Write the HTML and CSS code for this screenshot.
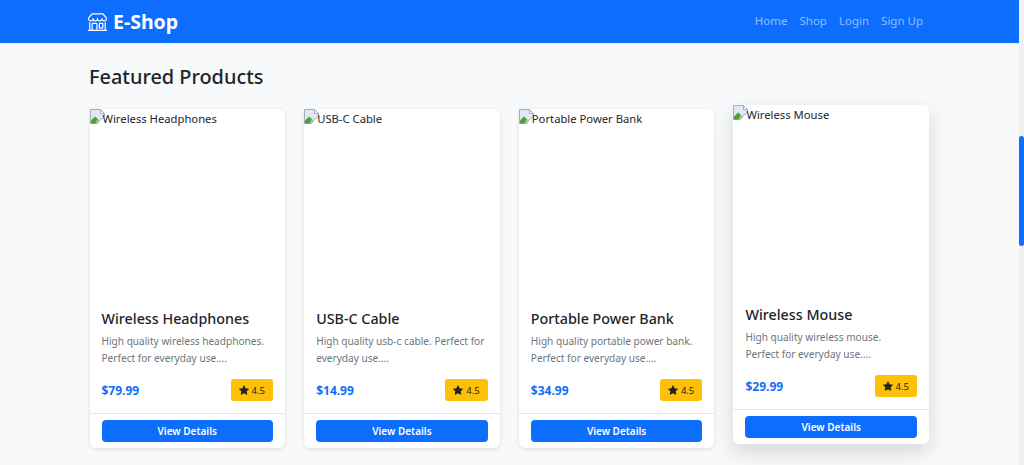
FILE: index.html
```html
<!DOCTYPE html>
<html lang="en">
<head>
    <meta charset="UTF-8">
    <meta name="viewport" content="width=device-width, initial-scale=1.0">
    <title>E-Shop</title>
    <link rel="stylesheet" href="styles.css">
</head>
<body>
    <nav class="navbar">
        <div class="nav-inner">
            <a class="brand" href="#">
                <svg class="brand-icon" viewBox="0 0 16 16" fill="currentColor"><path d="M2.97 1.35A1 1 0 0 1 3.73 1h8.54a1 1 0 0 1 .76.35l2.609 3.044A1.5 1.5 0 0 1 16 5.37v.255a2.375 2.375 0 0 1-4.25 1.458A2.37 2.37 0 0 1 9.875 8 2.37 2.37 0 0 1 8 7.083 2.37 2.37 0 0 1 6.125 8a2.37 2.37 0 0 1-1.875-.917A2.375 2.375 0 0 1 0 5.625V5.37a1.5 1.5 0 0 1 .361-.976zm1.78 4.275a1.375 1.375 0 0 0 2.75 0 .5.5 0 0 1 1 0 1.375 1.375 0 0 0 2.75 0 .5.5 0 0 1 1 0 1.375 1.375 0 1 0 2.75 0V5.37a.5.5 0 0 0-.12-.325L12.27 2H3.73L1.12 5.045A.5.5 0 0 0 1 5.37v.255a1.375 1.375 0 0 0 2.75 0 .5.5 0 0 1 1 0M1.5 8.5A.5.5 0 0 1 2 9v6h1v-5a1 1 0 0 1 1-1h3a1 1 0 0 1 1 1v5h6V9a.5.5 0 0 1 1 0v6h.5a.5.5 0 0 1 0 1H.5a.5.5 0 0 1 0-1H1V9a.5.5 0 0 1 .5-.5M4 15h3v-5H4zm5-5a1 1 0 0 1 1-1h2a1 1 0 0 1 1 1v3a1 1 0 0 1-1 1h-2a1 1 0 0 1-1-1zm3 0h-2v3h2z"/></svg>
                E-Shop
            </a>
            <div class="nav-links">
                <a class="nav-link" href="#">Home</a>
                <a class="nav-link" href="#">Shop</a>
                <a class="nav-link" href="#">Login</a>
                <a class="nav-link" href="#">Sign Up</a>
            </div>
        </div>
    </nav>

    <main class="container">
        <h2 class="section-title">Featured Products</h2>
        <div class="product-grid">
            <div class="card">
                <div class="card-image">
                    <svg class="broken-icon" viewBox="0 0 16 16"><path d="M.5.5h10l4 4v3l-4 3-3 4h-7z" fill="#dfe8f5" stroke="#a9adb3"/><path d="M10.5.5v4h4z" fill="#fff" stroke="#a9adb3"/><path d="M1 14.5v-3l4-4 3 2.5-2.5 4.500z" fill="#4f9f35"/><path d="M5.500 14.500l2.500-4 2 .500-2.500 3.500z" fill="#9fc98f"/></svg><span>Wireless Headphones</span>
                </div>
                <div class="card-body">
                    <h5 class="card-title">Wireless Headphones</h5>
                    <p class="card-text">High quality wireless headphones. Perfect for everyday use....</p>
                    <div class="price-row">
                        <span class="price">$79.99</span>
                        <span class="rating"><svg class="star" viewBox="0 0 16 16" fill="currentColor"><path d="M3.612 15.443c-.386.198-.824-.149-.746-.592l.83-4.73L.173 6.765c-.329-.314-.158-.888.283-.95l4.898-.696L7.538.792c.197-.39.73-.39.927 0l2.184 4.327 4.898.696c.441.062.612.636.282.95l-3.522 3.356.83 4.73c.078.443-.36.79-.746.592L8 13.187l-4.389 2.256z"/></svg>4.5</span>
                    </div>
                </div>
                <div class="card-footer"><a class="btn" href="#">View Details</a></div>
            </div>
            <div class="card">
                <div class="card-image">
                    <svg class="broken-icon" viewBox="0 0 16 16"><path d="M.5.5h10l4 4v3l-4 3-3 4h-7z" fill="#dfe8f5" stroke="#a9adb3"/><path d="M10.5.5v4h4z" fill="#fff" stroke="#a9adb3"/><path d="M1 14.5v-3l4-4 3 2.5-2.5 4.500z" fill="#4f9f35"/><path d="M5.500 14.500l2.500-4 2 .500-2.500 3.500z" fill="#9fc98f"/></svg><span>USB-C Cable</span>
                </div>
                <div class="card-body">
                    <h5 class="card-title">USB-C Cable</h5>
                    <p class="card-text">High quality usb-c cable. Perfect for everyday use....</p>
                    <div class="price-row">
                        <span class="price">$14.99</span>
                        <span class="rating"><svg class="star" viewBox="0 0 16 16" fill="currentColor"><path d="M3.612 15.443c-.386.198-.824-.149-.746-.592l.83-4.73L.173 6.765c-.329-.314-.158-.888.283-.95l4.898-.696L7.538.792c.197-.39.73-.39.927 0l2.184 4.327 4.898.696c.441.062.612.636.282.95l-3.522 3.356.83 4.73c.078.443-.36.79-.746.592L8 13.187l-4.389 2.256z"/></svg>4.5</span>
                    </div>
                </div>
                <div class="card-footer"><a class="btn" href="#">View Details</a></div>
            </div>
            <div class="card">
                <div class="card-image">
                    <svg class="broken-icon" viewBox="0 0 16 16"><path d="M.5.5h10l4 4v3l-4 3-3 4h-7z" fill="#dfe8f5" stroke="#a9adb3"/><path d="M10.5.5v4h4z" fill="#fff" stroke="#a9adb3"/><path d="M1 14.5v-3l4-4 3 2.5-2.5 4.500z" fill="#4f9f35"/><path d="M5.500 14.500l2.500-4 2 .500-2.500 3.500z" fill="#9fc98f"/></svg><span>Portable Power Bank</span>
                </div>
                <div class="card-body">
                    <h5 class="card-title">Portable Power Bank</h5>
                    <p class="card-text">High quality portable power bank. Perfect for everyday use....</p>
                    <div class="price-row">
                        <span class="price">$34.99</span>
                        <span class="rating"><svg class="star" viewBox="0 0 16 16" fill="currentColor"><path d="M3.612 15.443c-.386.198-.824-.149-.746-.592l.83-4.73L.173 6.765c-.329-.314-.158-.888.283-.95l4.898-.696L7.538.792c.197-.39.73-.39.927 0l2.184 4.327 4.898.696c.441.062.612.636.282.95l-3.522 3.356.83 4.73c.078.443-.36.79-.746.592L8 13.187l-4.389 2.256z"/></svg>4.5</span>
                    </div>
                </div>
                <div class="card-footer"><a class="btn" href="#">View Details</a></div>
            </div>
            <div class="card card-hover">
                <div class="card-image">
                    <svg class="broken-icon" viewBox="0 0 16 16"><path d="M.5.5h10l4 4v3l-4 3-3 4h-7z" fill="#dfe8f5" stroke="#a9adb3"/><path d="M10.5.5v4h4z" fill="#fff" stroke="#a9adb3"/><path d="M1 14.5v-3l4-4 3 2.5-2.5 4.500z" fill="#4f9f35"/><path d="M5.500 14.500l2.500-4 2 .500-2.500 3.500z" fill="#9fc98f"/></svg><span>Wireless Mouse</span>
                </div>
                <div class="card-body">
                    <h5 class="card-title">Wireless Mouse</h5>
                    <p class="card-text">High quality wireless mouse. Perfect for everyday use....</p>
                    <div class="price-row">
                        <span class="price">$29.99</span>
                        <span class="rating"><svg class="star" viewBox="0 0 16 16" fill="currentColor"><path d="M3.612 15.443c-.386.198-.824-.149-.746-.592l.83-4.73L.173 6.765c-.329-.314-.158-.888.283-.95l4.898-.696L7.538.792c.197-.39.73-.39.927 0l2.184 4.327 4.898.696c.441.062.612.636.282.95l-3.522 3.356.83 4.73c.078.443-.36.79-.746.592L8 13.187l-4.389 2.256z"/></svg>4.5</span>
                    </div>
                </div>
                <div class="card-footer"><a class="btn" href="#">View Details</a></div>
            </div>
        </div>
    </main>

    <div class="scroll-track"><div class="scroll-thumb"></div></div>
</body>
</html>
```

FILE: styles.css
```css
html, body {
    height: 100%;
    overflow: hidden;
}
body {
    font-family: "Noto Sans", "Open Sans", sans-serif;
    background-color: #f8f9fa;
    color: #212529;
    margin: 0;
    padding: 0 5px 0 0;
    font-size: 12px;
}
a {
    text-decoration: none;
}
.navbar {
    background-color: #0d6efd;
    height: 43px;
    box-shadow: 0 1px 2px rgba(0, 0, 0, 0.08);
}
.nav-inner {
    width: 840px;
    height: 100%;
    margin: 0 0 0 88px;
    display: flex;
    justify-content: space-between;
    align-items: center;
}
.brand {
    display: flex;
    align-items: center;
    gap: 6px;
    color: #fff;
    font-size: 19.500px;
    font-weight: 700;
    padding-bottom: 1px;
}
.brand-icon {
    width: 19px;
    height: 19px;
}
.nav-links {
    display: flex;
    gap: 12px;
    padding: 0 5px 2px 0;
}
.nav-link {
    color: rgba(255, 255, 255, 0.55);
    font-size: 11.500px;
}
.container {
    width: 840px;
    margin: 0 0 0 89.500px;
}
.section-title {
    font-size: 19.900px;
    font-weight: 500;
    line-height: 24px;
    margin: 22px 0 20px -0.500px;
}
.product-grid {
    display: grid;
    grid-template-columns: repeat(4, 195.500px);
    gap: 19.170px;
}
.card {
    background-color: #fff;
    border-radius: 6px;
    box-shadow: 0 1px 4px rgba(0, 0, 0, 0.12);
    height: 339px;
    display: flex;
    flex-direction: column;
}
.card-hover {
    transform: translateY(-4px);
    box-shadow: 0 8px 20px rgba(0, 0, 0, 0.14);
}
.card-image {
    height: 188px;
    display: flex;
    align-items: flex-start;
    font-size: 11.250px;
    line-height: 19px;
}
.broken-icon {
    width: 16px;
    height: 16px;
    flex-shrink: 0;
    margin-right: -3px;
}
.card-body {
    flex: 1;
    padding: 13px 12px 0 12px;
}
.card-title {
    font-size: 14.300px;
    font-weight: 500;
    line-height: 18px;
    margin: 0 0 5px 0;
    color: #212529;
}
.card-text {
    font-size: 10.100px;
    line-height: 17px;
    color: #6c757d;
    margin: 0 0 12px 0;
}
.price-row {
    display: flex;
    justify-content: space-between;
    align-items: center;
}
.price {
    color: #0d6efd;
    font-size: 12px;
    font-weight: 700;
}
.rating {
    display: flex;
    align-items: center;
    gap: 3px;
    height: 22px;
    padding: 0 8px;
    background-color: #ffc107;
    border-radius: 3px;
    font-size: 9.500px;
}
.star {
    width: 10px;
    height: 10px;
}
.card-footer {
    border-top: 1px solid #e5e7ea;
    padding: 6px 12px;
}
.btn {
    display: block;
    height: 22px;
    line-height: 22px;
    background-color: #0d6efd;
    color: #fff;
    border-radius: 4px;
    text-align: center;
    font-size: 10px;
    font-weight: 600;
}
.scroll-track {
    position: fixed;
    top: 0;
    right: 0;
    bottom: 0;
    width: 5px;
    background-color: #f1f1f1;
}
.scroll-thumb {
    position: absolute;
    top: 136px;
    left: 0;
    width: 5px;
    height: 110px;
    background-color: #0d6efd;
    border-radius: 3px;
}
```
